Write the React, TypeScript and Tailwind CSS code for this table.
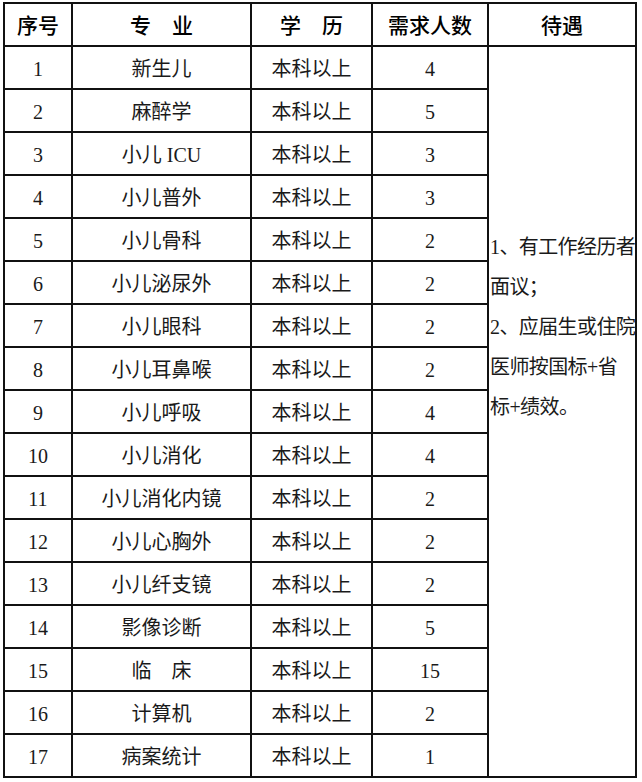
import React from "react";

const rows: [string, string, string][] = [
  ["1", "新生儿", "4"],
  ["2", "麻醉学", "5"],
  ["3", "小儿 ICU", "3"],
  ["4", "小儿普外", "3"],
  ["5", "小儿骨科", "2"],
  ["6", "小儿泌尿外", "2"],
  ["7", "小儿眼科", "2"],
  ["8", "小儿耳鼻喉", "2"],
  ["9", "小儿呼吸", "4"],
  ["10", "小儿消化", "4"],
  ["11", "小儿消化内镜", "2"],
  ["12", "小儿心胸外", "2"],
  ["13", "小儿纤支镜", "2"],
  ["14", "影像诊断", "5"],
  ["15", "临　床", "15"],
  ["16", "计算机", "2"],
  ["17", "病案统计", "1"],
];

function Cell({ children }: { children: React.ReactNode }) {
  return (
    <div className="flex items-center justify-center bg-white pt-[3px] font-['Liberation_Serif','Noto_Sans_CJK_SC',serif] text-[20px] text-[#1a1a1a]">
      {children}
    </div>
  );
}

export default function App() {
  return (
    <div className="h-[782px] w-[642px] bg-white pl-[3px] pt-[2px]">
      <div className="grid w-fit grid-cols-[66px_177px_119px_114px_146px] grid-rows-[repeat(18,41px)] gap-[2px] bg-[#111] p-[2px]">
        {["序号", "专　业", "学　历", "需求人数", "待遇"].map((h) => (
          <div
            key={h}
            className="flex items-center justify-center bg-white pt-[1px] font-['Noto_Sans_CJK_SC',sans-serif] text-[21px] font-medium text-black"
          >
            {h}
          </div>
        ))}
        <div className="col-start-5 row-span-17 row-start-2 whitespace-nowrap bg-white pl-[1px] pt-[180px] font-['Liberation_Serif','Noto_Sans_CJK_SC',serif] text-[20px] leading-[40px] tracking-[-0.6px] text-[#1a1a1a]">
          <div>1、有工作经历者</div>
          <div>面议；</div>
          <div>2、应届生或住院</div>
          <div>医师按国标+省</div>
          <div>标+绩效。</div>
        </div>
        {rows.map(([n, m, c]) => (
          <React.Fragment key={n}>
            <Cell>{n}</Cell>
            <Cell>{m}</Cell>
            <Cell>本科以上</Cell>
            <Cell>{c}</Cell>
          </React.Fragment>
        ))}
      </div>
    </div>
  );
}
